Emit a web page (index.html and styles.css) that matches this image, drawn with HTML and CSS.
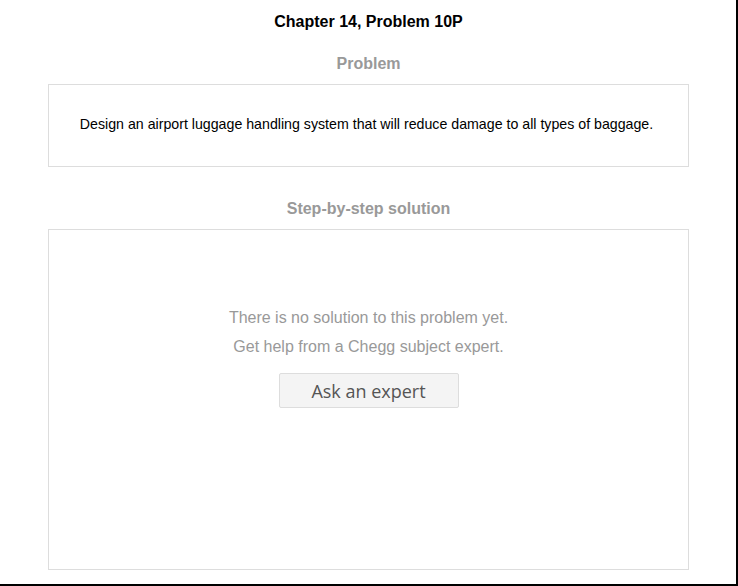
FILE: index.html
```html
<!DOCTYPE html>
<html>
<head>
<meta charset="utf-8">
<link rel="stylesheet" href="styles.css">
</head>
<body>
<div class="frame">
  <h1 class="title">Chapter 14, Problem 10P</h1>
  <h2 class="section-title">Problem</h2>
  <div class="card problem-card">
    <p class="problem-text">Design an airport luggage handling system that will reduce damage to all types of baggage.</p>
  </div>
  <h2 class="section-title solution-title">Step-by-step solution</h2>
  <div class="card solution-card">
    <p class="empty-line">There is no solution to this problem yet.</p>
    <p class="empty-line">Get help from a Chegg subject expert.</p>
    <button class="ask-btn">Ask an expert</button>
  </div>
</div>
</body>
</html>
```
FILE: styles.css
```css
html, body {
  margin: 0;
  padding: 0;
  background: #fff;
}
.frame {
  box-sizing: border-box;
  width: 738px;
  height: 586px;
  border-right: 2px solid #000;
  border-bottom: 2px solid #000;
  padding: 0 47px 0 48px;
  font-family: "Liberation Sans", Arial, sans-serif;
  display: flex;
  flex-direction: column;
}
.title {
  margin: 13px 0 0 0;
  font-size: 16px;
  line-height: 18px;
  font-weight: bold;
  color: #000;
  text-align: center;
}
.section-title {
  margin: 24px 0 0 0;
  font-size: 16px;
  line-height: 18px;
  font-weight: bold;
  color: #999;
  text-align: center;
}
.solution-title {
  margin-top: 33px;
}
.card {
  box-sizing: border-box;
  border: 1px solid #ddd;
  background: #fff;
}
.problem-card {
  margin-top: 11px;
  height: 83px;
  padding: 0 4px 4px 0;
  display: flex;
  align-items: center;
  justify-content: center;
}
.problem-text {
  margin: 0;
  font-size: 14.2px;
  color: #000;
}
.solution-card {
  margin-top: 11px;
  height: 341px;
  display: flex;
  flex-direction: column;
  align-items: center;
  padding-top: 73px;
}
.empty-line {
  margin: 0;
  font-size: 16px;
  line-height: 29px;
  color: #999;
}
.ask-btn {
  margin-top: 12px;
  width: 180px;
  height: 35px;
  background: #f4f4f4;
  border: 1px solid #ddd;
  border-radius: 2px;
  font-family: "Open Sans", "DejaVu Sans", sans-serif;
  font-size: 18px;
  color: #555;
  padding: 0;
}
```
